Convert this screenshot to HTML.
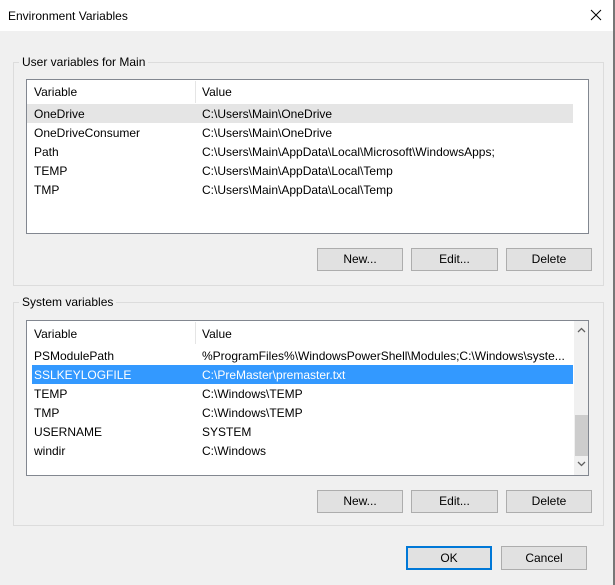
<!DOCTYPE html>
<html><head><style>
*{margin:0;padding:0;box-sizing:border-box}
body{width:615px;height:585px;overflow:hidden;background:#f0f0f0;font-family:"Liberation Sans",sans-serif;font-size:12px;color:#000;position:relative}
.a{position:absolute}
.title{left:0;top:0;width:615px;height:31px;background:#fff}
.grp{border:1px solid #dcdcdc}
.leg{background:#f0f0f0;padding:0 3px;white-space:nowrap}
.list{background:#fff;border:1px solid #828790}
.t{white-space:nowrap}
.btn{background:#e1e1e1;border:1px solid #adadad;text-align:center;line-height:21px}
</style></head><body>
<div class="a title"></div>
<div class="a t" style="left:8px;top:9px">Environment Variables</div>
<svg class="a" style="left:590px;top:9px" width="12" height="12"><path d="M1 1L11 11M11 1L1 11" stroke="#000" stroke-width="1"/></svg>
<div class="a" style="left:613px;top:0;width:2px;height:585px;background:#777"></div>

<div class="a grp" style="left:13px;top:62px;width:591px;height:224px"></div>
<div class="a leg" style="left:19px;top:55px">User variables for Main</div>
<div class="a list" style="left:26px;top:79px;width:563px;height:155px"></div>
<div class="a" style="left:195px;top:81px;width:1px;height:22px;background:#e5e5e5"></div>
<div class="a" style="left:27px;top:104px;width:546px;height:19px;background:#e5e5e5"></div>
<div class="a t" style="left:34px;top:85px">Variable</div><div class="a t" style="left:202px;top:85px">Value</div>
<div class="a t" style="left:34px;top:107px">OneDrive</div><div class="a t" style="left:202px;top:107px">C:\Users\Main\OneDrive</div>
<div class="a t" style="left:34px;top:126px">OneDriveConsumer</div><div class="a t" style="left:202px;top:126px">C:\Users\Main\OneDrive</div>
<div class="a t" style="left:34px;top:145px">Path</div><div class="a t" style="left:202px;top:145px">C:\Users\Main\AppData\Local\Microsoft\WindowsApps;</div>
<div class="a t" style="left:34px;top:164px">TEMP</div><div class="a t" style="left:202px;top:164px">C:\Users\Main\AppData\Local\Temp</div>
<div class="a t" style="left:34px;top:183px">TMP</div><div class="a t" style="left:202px;top:183px">C:\Users\Main\AppData\Local\Temp</div>
<div class="a btn" style="left:317px;top:248px;width:86px;height:23px">New...</div>
<div class="a btn" style="left:411px;top:248px;width:87px;height:23px">Edit...</div>
<div class="a btn" style="left:506px;top:248px;width:86px;height:23px">Delete</div>

<div class="a grp" style="left:13px;top:302px;width:591px;height:224px"></div>
<div class="a leg" style="left:19px;top:295px">System variables</div>
<div class="a list" style="left:26px;top:320px;width:563px;height:156px"></div>
<div class="a" style="left:195px;top:322px;width:1px;height:22px;background:#e5e5e5"></div>
<div class="a" style="left:32px;top:365px;width:541px;height:19px;background:#3399ff"></div>
<div class="a t" style="left:34px;top:327px">Variable</div><div class="a t" style="left:202px;top:327px">Value</div>
<div class="a t" style="left:34px;top:349px">PSModulePath</div><div class="a t" style="left:202px;top:349px">%ProgramFiles%\WindowsPowerShell\Modules;C:\Windows\syste...</div>
<div class="a t" style="left:34px;top:368px;color:#fff">SSLKEYLOGFILE</div><div class="a t" style="left:202px;top:368px;color:#fff">C:\PreMaster\premaster.txt</div>
<div class="a t" style="left:34px;top:387px">TEMP</div><div class="a t" style="left:202px;top:387px">C:\Windows\TEMP</div>
<div class="a t" style="left:34px;top:406px">TMP</div><div class="a t" style="left:202px;top:406px">C:\Windows\TEMP</div>
<div class="a t" style="left:34px;top:425px">USERNAME</div><div class="a t" style="left:202px;top:425px">SYSTEM</div>
<div class="a t" style="left:34px;top:444px">windir</div><div class="a t" style="left:202px;top:444px">C:\Windows</div>
<div class="a" style="left:574px;top:321px;width:14px;height:154px;background:#f0f0f0"></div>
<div class="a" style="left:575px;top:415px;width:13px;height:41px;background:#cdcdcd"></div>
<svg class="a" style="left:577px;top:327px" width="9" height="6"><path d="M1 5L4.5 1.5L8 5" stroke="#606060" fill="none" stroke-width="1.3"/></svg>
<svg class="a" style="left:577px;top:461px" width="9" height="6"><path d="M1 1L4.5 4.5L8 1" stroke="#606060" fill="none" stroke-width="1.3"/></svg>
<div class="a btn" style="left:317px;top:490px;width:86px;height:23px">New...</div>
<div class="a btn" style="left:411px;top:490px;width:87px;height:23px">Edit...</div>
<div class="a btn" style="left:506px;top:490px;width:86px;height:23px">Delete</div>

<div class="a btn" style="left:406px;top:546px;width:86px;height:24px;border:2px solid #0078d7;line-height:20px">OK</div>
<div class="a btn" style="left:501px;top:546px;width:86px;height:24px;line-height:22px">Cancel</div>
</body></html>
